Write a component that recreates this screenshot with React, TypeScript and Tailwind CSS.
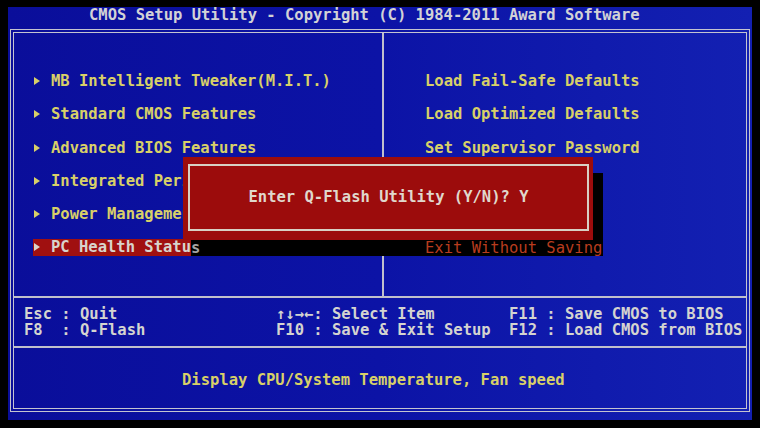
import React from 'react';

const leftItems = [
    'MB Intelligent Tweaker(M.I.T.)',
    'Standard CMOS Features',
    'Advanced BIOS Features',
    'Integrated Peripherals',
    'Power Management Setup',
    'PC Health Status',
];

const rightItems = [
    'Load Fail-Safe Defaults',
    'Load Optimized Defaults',
    'Set Supervisor Password',
    'Set User Password',
    'Save & Exit Setup',
    'Exit Without Saving',
];

const selected = 5;

// small right-pointing triangle in front of each submenu entry
const Arrow = ({ light }: { light?: boolean }) => (
    <span
        className={`inline-block w-0 h-0 border-y-[4px] border-y-transparent border-l-[6px] ${light ? 'border-l-[#d8d4cc]' : 'border-l-[#d8d068]'}`}
    />
);

const App = () => {
    return (
        <div
            className="w-[760px] h-[428px] bg-black pt-[7px] pl-[8px] overflow-hidden font-bold text-[15.5px]"
            style={{ fontFamily: '"DejaVu Sans Mono", "Liberation Mono", monospace' }}
        >
            <div className="w-[744px] h-[413px] flex flex-col px-[2px] bg-gradient-to-r from-[#0a0e9a] via-[#0c13a6] to-[#1320b2]">
                {/* title bar */}
                <div className="h-[22px] pl-[79px] leading-[16px] text-[#d2d2d6] whitespace-pre">
                    CMOS Setup Utility - Copyright (C) 1984-2011 Award Software
                </div>

                {/* main double frame */}
                <div className="relative h-[383px] flex flex-col border-4 border-double border-[#c4c4d0]">
                    <div className="h-[265px] flex border-b-2 border-[#c0c0cc]">
                        <div className="w-[370px] border-r-2 border-[#c0c0cc] flex flex-col pt-[40px] gap-[16.6px]">
                            {leftItems.map((item, i) => (
                                <div key={item} className="h-[16.6px] flex items-center pl-[19px]">
                                    <span
                                        className={`h-[16.6px] flex items-center pl-[1px] pr-[2px] ${i === selected ? 'bg-[#a01010] text-[#d8d4cc]' : 'text-[#d8d068]'}`}
                                    >
                                        <Arrow light={i === selected} />
                                        {/* last letter of the highlighted entry sits under the dialog shadow */}
                                        <span className="ml-[11px] whitespace-pre leading-[16px]">
                                            {i === selected ? item.slice(0, -1) : item}
                                        </span>
                                    </span>
                                </div>
                            ))}
                        </div>
                        <div className="flex-1 flex flex-col pt-[40px] gap-[16.6px]">
                            {rightItems.slice(0, 5).map((item) => (
                                <div key={item} className="h-[16.6px] flex items-center pl-[41px] text-[#d8d068] whitespace-pre leading-[16px]">
                                    {item}
                                </div>
                            ))}
                        </div>
                    </div>

                    {/* key help */}
                    <div className="h-[50px] flex items-center border-b-2 border-[#c0c0cc] pl-[10px] text-[#d4d4d0] whitespace-pre leading-[16.5px]">
                        <div className="w-[252px] flex flex-col">
                            <span>Esc : Quit</span>
                            <span>F8  : Q-Flash</span>
                        </div>
                        <div className="w-[233px] flex flex-col">
                            <span>↑↓→←: Select Item</span>
                            <span>F10 : Save & Exit Setup</span>
                        </div>
                        <div className="flex-1 flex flex-col">
                            <span>F11 : Save CMOS to BIOS</span>
                            <span>F12 : Load CMOS from BIOS</span>
                        </div>
                    </div>

                    {/* item description */}
                    <div className="flex-1 flex items-center pl-[168px] pt-[6px] text-[#d8d068] whitespace-pre">
                        Display CPU/System Temperature, Fan speed
                    </div>

                    {/* dialog shadow, dimming whatever it falls on */}
                    <div className="absolute left-[177px] top-[140px] w-[412px] h-[83px] bg-black flex flex-col justify-end">
                        <div className="h-[16.6px] flex items-center whitespace-pre leading-[16px]">
                            <span className="text-[#a4a4a4]">s</span>
                            <span className="ml-[224.7px] text-[#b83c1e] font-normal">{rightItems[5]}</span>
                        </div>
                    </div>

                    {/* Q-Flash prompt */}
                    <div className="absolute left-[169px] top-[124px] w-[410px] h-[83px] bg-[#9c0c0c] pt-[7px] pb-[9px] pl-[5px] pr-[4px]">
                        <div className="h-full border-2 border-[#d8d0c4] flex items-center justify-center text-[#e0d8cc] whitespace-pre">
                            Enter Q-Flash Utility (Y/N)? Y
                        </div>
                    </div>
                </div>
            </div>
        </div>
    );
};

export default App;
